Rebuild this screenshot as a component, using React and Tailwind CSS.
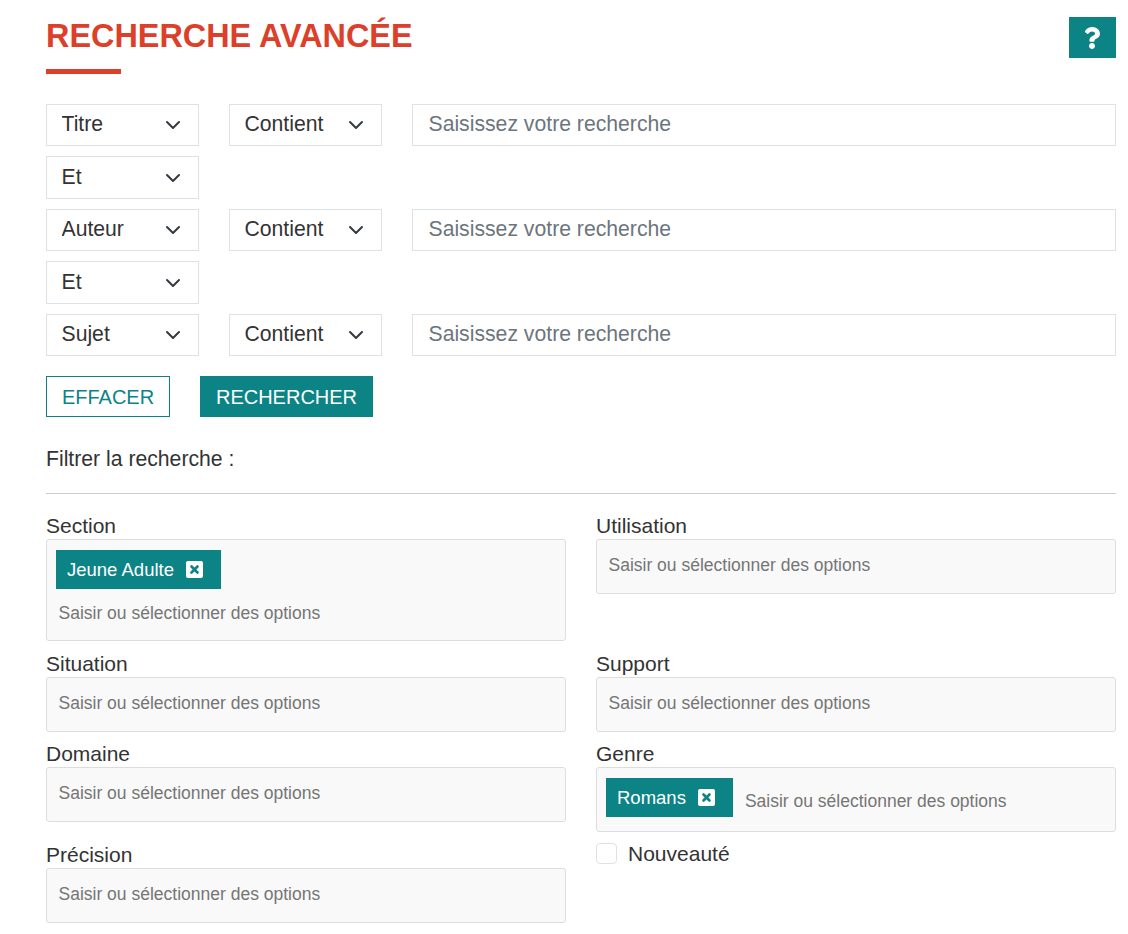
import React from 'react';
import { FaQuestion } from 'react-icons/fa';

const PLACEHOLDER = 'Saisir ou sélectionner des options';

function Select({ options, h = 'h-[42px]', text = 'Titre' }) {
  return (
    <div className={`relative w-[153px] shrink-0 ${h}`}>
      <select
        defaultValue={text}
        className="w-full h-full appearance-none bg-white border border-[#dee2e6] pl-[14.5px] pr-8 pb-[2px] text-[21.2px] text-[#333] outline-none"
      >
        {options.map((o) => (
          <option key={o}>{o}</option>
        ))}
      </select>
      <svg className="absolute right-[18px] top-1/2 -translate-y-1/2 pointer-events-none" width="16" height="16" viewBox="0 0 16 16" fill="none">
        <path d="m2 5 6 6 6-6" stroke="#343a40" strokeWidth="2" strokeLinecap="round" strokeLinejoin="round" />
      </svg>
    </div>
  );
}

function SearchRow({ field }) {
  return (
    <div className="flex gap-[30px]">
      <Select options={['Titre', 'Auteur', 'Sujet']} text={field} />
      <Select options={['Contient', 'Commence par', 'Est']} text="Contient" />
      <input
        type="text"
        placeholder="Saisissez votre recherche"
        className="flex-1 min-w-0 h-[42px] border border-[#dee2e6] pl-[15.5px] pr-4 pb-[2px] text-[21.2px] text-[#333] placeholder:text-[#6c757d] outline-none"
      />
    </div>
  );
}

function Operator() {
  return <Select options={['Et', 'Ou']} text="Et" h="h-[43px]" />;
}

function CloseIcon() {
  return (
    <svg width="17" height="17" viewBox="0 0 17 17">
      <rect width="17" height="17" rx="2" fill="#fff" />
      <path d="m5.5 5.5 6 6m0-6-6 6" stroke="#0c8385" strokeWidth="2.6" strokeLinecap="round" />
    </svg>
  );
}

function Tag({ label }) {
  return (
    <span className="inline-flex items-center h-[38.5px] bg-[#0c8385] text-white text-[18.5px] pl-[11px] pr-[18px] gap-[12px] shrink-0">
      <span className="pt-[1px]">{label}</span>
      <CloseIcon />
    </span>
  );
}

function MultiField({ label, tag, stacked }) {
  return (
    <div>
      <label className="block h-[25px] leading-[23px] text-[21px] text-[#333]">{label}</label>
      {tag && stacked ? (
        <div className="h-[102px] bg-[#f9f9f9] border border-[#ddd] rounded-[3px] pt-[10px] pl-[9px]">
          <Tag label={tag} />
          <div className="text-[17.5px] text-[#757575] pl-[2.5px] mt-[11.5px] leading-[26px]">{PLACEHOLDER}</div>
        </div>
      ) : tag ? (
        <div className="h-[65px] bg-[#f9f9f9] border border-[#ddd] rounded-[3px] pt-[10px] pl-[9px] flex">
          <Tag label={tag} />
          <span className="text-[17.5px] text-[#757575] ml-[12px] leading-[26px] mt-[10px]">{PLACEHOLDER}</span>
        </div>
      ) : (
        <div className="h-[55px] bg-[#f9f9f9] border border-[#ddd] rounded-[3px] pl-[11.5px] pt-3 text-[17.5px] text-[#757575] leading-[26px]">
          {PLACEHOLDER}
        </div>
      )}
    </div>
  );
}

export default function App() {
  return (
    <div className="w-[1128px] h-[934px] overflow-hidden bg-white pl-[46px] pr-3 font-['Liberation_Sans',Arial,sans-serif] text-[#333]">
      <div className="flex justify-between items-start pt-[17px] h-[104px]">
        <div>
          <h1 className="text-[32.4px] leading-[37px] font-bold text-[#dc3f2a] pt-[1px]">RECHERCHE AVANCÉE</h1>
          <div className="w-[75px] h-[5px] bg-[#dc3f2a] mt-[14px]" />
        </div>
        <button className="w-[47px] h-[41px] bg-[#0c8385] text-white flex items-center justify-center pr-[2px]">
          <FaQuestion className="text-[22px]" />
        </button>
      </div>

      <div className="flex flex-col gap-[10px]">
        <SearchRow field="Titre" />
        <Operator />
        <SearchRow field="Auteur" />
        <Operator />
        <SearchRow field="Sujet" />
      </div>

      <div className="flex gap-[30px] mt-5">
        <button className="w-[124px] h-[41px] border border-[#0c8385] text-[#0c8385] text-[20px]">EFFACER</button>
        <button className="w-[173px] h-[41px] bg-[#0c8385] text-white text-[20px]">RECHERCHER</button>
      </div>

      <p className="mt-[29px] text-[21.2px] leading-[26px]">Filtrer la recherche :</p>
      <hr className="mt-[21px] border-t border-[#ccc]" />

      <div className="grid grid-cols-2 gap-x-[30px] gap-y-[10.67px] mt-5 items-start">
        <MultiField label="Section" tag="Jeune Adulte" stacked />
        <MultiField label="Utilisation" />
        <MultiField label="Situation" />
        <MultiField label="Support" />
        <MultiField label="Domaine" />
        <MultiField label="Genre" tag="Romans" />
        <MultiField label="Précision" />
        <label className="flex items-center gap-[11px] text-[21px] h-[22px]">
          <span className="w-[21px] h-[21px] bg-white border border-[#dee2e6] rounded-[4px]" />
          Nouveauté
        </label>
      </div>
    </div>
  );
}
